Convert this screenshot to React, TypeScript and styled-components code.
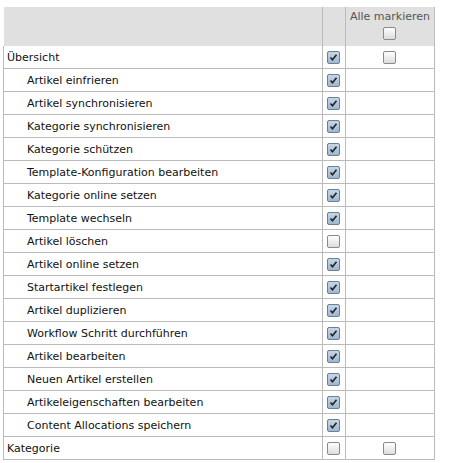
import React from "react";
import styled, { createGlobalStyle } from "styled-components";

const Global = createGlobalStyle`
  body { margin: 0; background: #fff; font-family: "DejaVu Sans", Verdana, sans-serif; }
`;

const Wrap = styled.div`padding: 7px 0 0 3px;`;
const Table = styled.table`
  border-collapse: collapse; width: 432px; font-size: 11px; color: #111;
`;
const Th = styled.th`
  background: #e0e0e0; font-weight: normal; color: #555; height: 36px;
  border-left: 1px solid #bbb; border-right: 1px solid #bbb;
  text-align: center; vertical-align: top; padding: 3px 0 0; font-size: 11px;
`;
const Td = styled.td<{ $indent?: boolean; $center?: boolean }>`
  height: 22px; border: 1px solid #bbb; border-top: none;
  padding: 0 0 0 ${(p) => (p.$indent ? "23px" : "3px")};
  text-align: ${(p) => (p.$center ? "center" : "left")};
  ${(p) => p.$center && "padding: 0;"}
  vertical-align: middle;
`;
const Box = styled.span<{ $on?: boolean }>`
  display: inline-block; width: 11px; height: 11px; border-radius: 2px;
  border: 1px solid ${(p) => (p.$on ? "#6b7f96" : "#8a8a8a")};
  background: ${(p) => (p.$on ? "linear-gradient(#c5d6e8,#9fb7d0)" : "linear-gradient(#fff,#dcdcdc)")};
  vertical-align: middle; position: relative;
`;
const HeadBox = styled.div`margin-top: 4px; line-height: 0;`;

function Check({ on }: { on?: boolean }) {
  return (
    <Box $on={on}>
      {on && (
        <svg width="11" height="11" viewBox="0 0 11 11" style={{ position: "absolute", left: 0, top: 0 }}>
          <path d="M2.5 5.5 L4.5 7.8 L8.5 2.8" stroke="#222" strokeWidth="1.6" fill="none" />
        </svg>
      )}
    </Box>
  );
}

const items: [string, boolean][] = [
  ["Artikel einfrieren", true],
  ["Artikel synchronisieren", true],
  ["Kategorie synchronisieren", true],
  ["Kategorie schützen", true],
  ["Template-Konfiguration bearbeiten", true],
  ["Kategorie online setzen", true],
  ["Template wechseln", true],
  ["Artikel löschen", false],
  ["Artikel online setzen", true],
  ["Startartikel festlegen", true],
  ["Artikel duplizieren", true],
  ["Workflow Schritt durchführen", true],
  ["Artikel bearbeiten", true],
  ["Neuen Artikel erstellen", true],
  ["Artikeleigenschaften bearbeiten", true],
  ["Content Allocations speichern", true],
];

export default function App() {
  return (
    <Wrap>
      <Global />
      <Table>
        <thead>
          <tr>
            <Th style={{ width: 318, borderLeft: "none" }}></Th>
            <Th style={{ width: 22 }}></Th>
            <Th style={{ width: 88 }}>
              Alle markieren
              <HeadBox><Check /></HeadBox>
            </Th>
          </tr>
        </thead>
        <tbody>
          <tr>
            <Td>Übersicht</Td>
            <Td $center><Check on /></Td>
            <Td $center><Check /></Td>
          </tr>
          {items.map(([t, on]) => (
            <tr key={t}>
              <Td $indent>{t}</Td>
              <Td $center><Check on={on} /></Td>
              <Td $center></Td>
            </tr>
          ))}
          <tr>
            <Td>Kategorie</Td>
            <Td $center><Check /></Td>
            <Td $center><Check /></Td>
          </tr>
        </tbody>
      </Table>
    </Wrap>
  );
}
